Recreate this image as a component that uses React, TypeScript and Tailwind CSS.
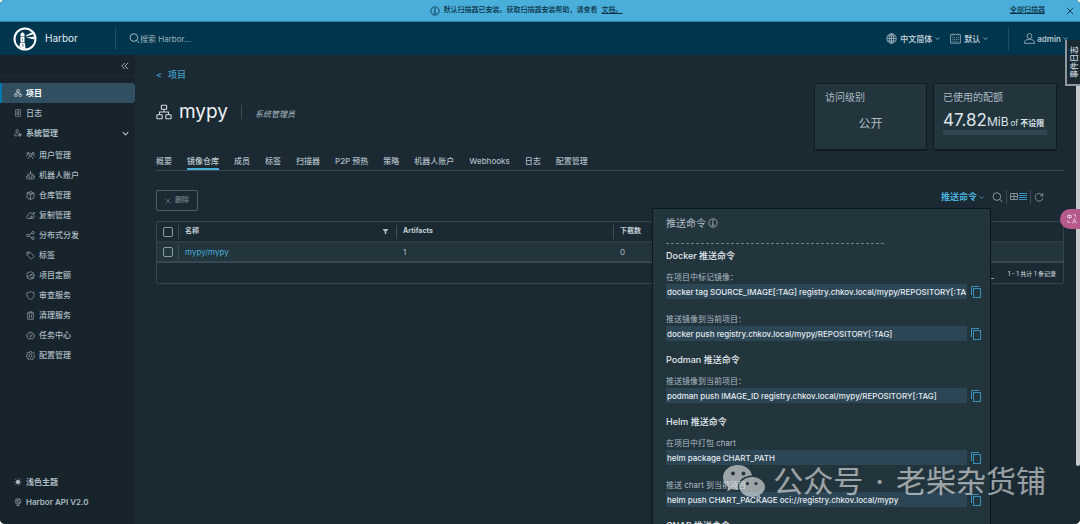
import { useState } from "react";
import type { ReactNode } from "react";

type IconProps = { className?: string; children: ReactNode };

function Icon({ className = "size-[10px]", children }: IconProps) {
  return (
    <svg viewBox="0 0 36 36" fill="none" stroke="currentColor" strokeWidth="2.4" className={`shrink-0 ${className}`} aria-hidden="true">
      {children}
    </svg>
  );
}

const orgPath = (
  <>
    <rect x="12" y="3" width="12" height="9" rx="1" />
    <rect x="2" y="24" width="12" height="9" rx="1" />
    <rect x="22" y="24" width="12" height="9" rx="1" />
    <path d="M18 12v6M8 24v-6h20v6" />
  </>
);

const logPath = (
  <>
    <rect x="7" y="3" width="22" height="30" rx="1" />
    <path d="M12 10h12M12 15h12M12 20h12M12 25h12" />
  </>
);

const adminPath = (
  <>
    <circle cx="14" cy="9" r="6" />
    <path d="M16 31H3v-7c3-4 7-6 11-6h4" />
    <circle cx="26" cy="26" r="5" strokeWidth="4" />
    <path d="M26 17v3M26 32v3M17 26h3M32 26h3" />
  </>
);

const children = [
  {
    name: "用户管理",
    icon: (
      <>
        <circle cx="18" cy="15" r="5" />
        <circle cx="8" cy="9" r="4" />
        <circle cx="28" cy="9" r="4" />
        <path d="M9 32v-5c2-3 5-5 9-5s7 2 9 5v5M2 22v-4c2-2 4-3 8-3M34 22v-4c-2-2-4-3-8-3" />
      </>
    ),
  },
  {
    name: "机器人账户",
    icon: (
      <>
        <path d="M7 32h22a3 3 0 0 0 3-3v-7a14 11 0 0 0-28 0v7a3 3 0 0 0 3 3zM18 11V5M1 20v7M35 20v7M12 27h12" />
        <circle cx="18" cy="4" r="2" />
        <circle cx="12" cy="20" r="2" />
        <circle cx="24" cy="20" r="2" />
      </>
    ),
  },
  { name: "仓库管理", icon: <path d="M18 2l14 6v19l-14 7-14-7V8zM4 8l14 7 14-7M18 15v19M11 5l14 7" /> },
  {
    name: "复制管理",
    icon: <path d="M29 14c4 2 5 6 4 10s-4 6-8 6H8c-4 0-6-3-6-6s3-6 6-6c0-7 5-12 12-11l5 2M20 18l4-4 10-6M29 6h6v6M14 24h12M22 20l4 4-4 4" />,
  },
  {
    name: "分布式分发",
    icon: (
      <>
        <circle cx="7" cy="18" r="5" />
        <circle cx="28" cy="7" r="5" />
        <circle cx="28" cy="29" r="5" />
        <path d="M12 16l12-7M12 20l12 7" />
      </>
    ),
  },
  {
    name: "标签",
    icon: (
      <>
        <path d="M4 4h12l17 17-12 12L4 16z" />
        <circle cx="10" cy="10" r="2" />
      </>
    ),
  },
  {
    name: "项目定额",
    icon: (
      <>
        <circle cx="18" cy="18" r="15" />
        <path d="M4 23c7 2 9-7 15-8 5-1 8 4 14 1M17 26h15M17 18l8-6" />
      </>
    ),
  },
  { name: "审查服务", icon: <path d="M18 2c4 3 9 5 14 5v10c0 8-6 13-14 17C10 30 4 25 4 17V7c5 0 10-2 14-5z" /> },
  { name: "清理服务", icon: <path d="M3 8h30M13 8V3h10v5M7 8v25h22V8M14 14v13M22 14v13" /> },
  {
    name: "任务中心",
    icon: (
      <>
        <path d="M8 31a15 15 0 1 1 20 0zM18 21l8-9M6 20h3M18 8v3M9 12l2 2M27 20h3" />
        <circle cx="18" cy="21" r="2" />
      </>
    ),
  },
  {
    name: "配置管理",
    icon: (
      <>
        <path d="M15 2h6l1 5 3 1 5-3 4 5-3 4 1 3 3 2-1 6-5 1-2 3 1 4-6 2-3-4h-3l-3 4-6-3 2-4-3-3-4-1-1-6 4-2 1-3-3-4 5-4 4 2 3-1z" />
        <circle cx="18" cy="18" r="6" />
      </>
    ),
  },
];

const tabs = ["概要", "镜像仓库", "成员", "标签", "扫描器", "P2P 预热", "策略", "机器人账户", "Webhooks", "日志", "配置管理"];

const commandGroups = [
  {
    title: "Docker 推送命令",
    commands: [
      { label: "在项目中标记镜像：", value: "docker tag SOURCE_IMAGE[:TAG] registry.chkov.local/mypy/REPOSITORY[:TAG]" },
      { label: "推送镜像到当前项目：", value: "docker push registry.chkov.local/mypy/REPOSITORY[:TAG]" },
    ],
  },
  {
    title: "Podman 推送命令",
    commands: [{ label: "推送镜像到当前项目：", value: "podman push IMAGE_ID registry.chkov.local/mypy/REPOSITORY[:TAG]" }],
  },
  {
    title: "Helm 推送命令",
    commands: [
      { label: "在项目中打包 chart", value: "helm package CHART_PATH" },
      { label: "推送 chart 到当前项目", value: "helm push CHART_PACKAGE oci://registry.chkov.local/mypy" },
    ],
  },
  { title: "CNAB 推送命令", commands: [] },
];

function Chevron({ className = "size-[5px]" }: { className?: string }) {
  return (
    <svg viewBox="0 0 10 10" fill="none" stroke="currentColor" strokeWidth="1.6" className={`shrink-0 ${className}`} aria-hidden="true">
      <path d="M1 3l4 4 4-4" />
    </svg>
  );
}

function Info({ className }: { className: string }) {
  return (
    <Icon className={className}>
      <circle cx="18" cy="18" r="15" strokeWidth="3" />
      <path d="M14 16h4v10M13 26h10" strokeWidth="3" />
      <circle cx="18" cy="10" r="1.5" fill="currentColor" />
    </Icon>
  );
}

function SearchIcon() {
  return (
    <Icon className="size-[11px]">
      <circle cx="16" cy="15" r="12.5" strokeWidth="3" />
      <path d="M25 24l9 9" strokeWidth="3" />
    </Icon>
  );
}

function HarborLogo() {
  return (
    <svg viewBox="0 0 48 48" className="size-6 shrink-0" aria-hidden="true">
      <circle cx="24" cy="24" r="21" fill="none" stroke="#fff" strokeWidth="4" />
      <path d="M15 14l4-4 4 4v5h-8zM15 20h8v11h-8zM14 32h10l1 12c-5 0-9-2-12-5z" fill="#fff" />
      <path d="M19 23v4M18 35h2v5" stroke="#00364d" strokeWidth="1.2" fill="none" />
      <path d="M26 17l13-7 3 4-16 5zM26 21l17-2v6z" fill="#fff" />
    </svg>
  );
}

function Banner() {
  return (
    <div className="flex h-[22px] shrink-0 items-center border-b border-[#2c7fa5] bg-[#49aeda] px-[6px] text-[7px] text-[#0b3144]">
      <div className="flex flex-1 items-center justify-center gap-1 pl-9 font-medium">
        <Info className="size-[10px]" />
        <span>默认扫描器已安装。获取扫描器安装帮助，请查看</span>
        <a href="#docs" className="underline">文档。</a>
      </div>
      <a href="#scanners" className="mr-[21px] font-medium underline">全部扫描器</a>
      <button type="button" aria-label="关闭">
        <svg viewBox="0 0 10 10" className="size-2" stroke="currentColor" strokeWidth="1.1"><path d="M1 1l8 8M9 1L1 9" /></svg>
      </button>
    </div>
  );
}

function Header() {
  return (
    <header className="flex h-[33px] shrink-0 items-center bg-[#00364d] pl-[13px] pr-3 text-[8px] text-[#b3c3cc]">
      <HarborLogo />
      <span className="ml-2 w-[70px] text-[10px] text-[#e3eaee]">Harbor</span>
      <span className="h-[22px] w-px bg-[#1d5068]" />
      <label className="ml-[13px] flex flex-1 items-center">
        <SearchIcon />
        <input type="search" aria-label="搜索 Harbor" placeholder="搜索 Harbor..." className="w-40 bg-transparent outline-none placeholder:text-[#9db0ba]" />
      </label>
      <button type="button" className="flex items-center gap-[3px] font-bold">
        <Icon className="size-[11px]">
          <circle cx="18" cy="18" r="15.5" />
          <ellipse cx="18" cy="18" rx="7" ry="15.5" />
          <path d="M2.500 18h31M5 10h26M5 26h26M18 2v32" />
        </Icon>
        中文简体
        <Chevron />
      </button>
      <button type="button" className="ml-[10px] flex items-center gap-[3px] font-bold">
        <Icon className="size-[11px]">
          <path d="M8 5H2v28h32V5h-6M12 5h12M10 1v8M26 1v8M8 15h3M14 15h3M20 15h3M26 15h3M8 21h3M14 21h3M20 21h3M26 21h3M8 27h3M14 27h3M20 27h3" />
        </Icon>
        默认
        <Chevron />
      </button>
      <span className="ml-5 h-[22px] w-px bg-[#1d5068]" />
      <button type="button" className="ml-[15px] flex items-center gap-[2px] font-semibold">
        <Icon className="size-[11px]">
          <circle cx="18" cy="10" r="8" />
          <path d="M2 34v-7c4-5 10-6 16-6s12 1 16 6v7z" />
        </Icon>
        admin
        <Chevron />
      </button>
    </header>
  );
}

function Sidebar() {
  return (
    <aside className="flex w-[135px] shrink-0 flex-col bg-[#17242b] pb-3 text-[8px] text-[#adbbc4]">
      <div className="mb-[6px] flex h-[22px] items-center justify-end border-b border-[#1e2d35] pr-[6px]">
        <button type="button" aria-label="收起">
          <svg viewBox="0 0 10 10" fill="none" stroke="currentColor" strokeWidth="1.1" className="size-2"><path d="M5 1L1 5l4 4M9 1L5 5l4 4" /></svg>
        </button>
      </div>
      <nav className="flex flex-col">
        <a href="#projects" className="flex h-5 items-center gap-1 rounded-r-[3px] border-l-2 border-[#0079ad] bg-[#324f62] pl-3 font-bold text-white">
          <Icon className="size-2">{orgPath}</Icon>
          项目
        </a>
        <a href="#logs" className="flex h-5 items-center gap-1 pl-[14px] font-medium">
          <Icon className="size-2">{logPath}</Icon>
          日志
        </a>
        <button type="button" className="flex h-5 items-center gap-1 pl-[14px] pr-[6px] font-bold">
          <Icon className="size-2">{adminPath}</Icon>
          <span className="flex-1 text-left">系统管理</span>
          <Chevron className="size-[7px]" />
        </button>
        <ul className="mt-[2px]">
          {children.map((item) => (
            <li key={item.name}>
              <a href="#system" className="flex h-5 items-center gap-1 pl-[26px] font-medium">
                <Icon className="size-[9px]">{item.icon}</Icon>
                {item.name}
              </a>
            </li>
          ))}
        </ul>
      </nav>
      <div className="mt-auto">
        <button type="button" className="flex h-5 w-full items-center gap-1 pl-[14px] font-bold">
          <Icon className="size-2">
            <circle cx="18" cy="18" r="9" fill="currentColor" />
            <path d="M18 1v5M18 30v5M1 18h5M30 18h5M6 6l3 3M27 27l3 3M30 6l-3 3M9 27l-3 3" />
          </Icon>
          浅色主题
        </button>
        <a href="#api" className="flex h-5 items-center gap-1 pl-[14px] font-semibold">
          <Icon className="size-2">
            <circle cx="18" cy="15" r="13" />
            <path d="M8 8l8 3 10-5M16 11l-4 9 12 3M24 13l6 5M10 34h16M18 28v6" />
            <circle cx="16" cy="11" r="2" />
            <circle cx="23" cy="20" r="2" />
          </Icon>
          Harbor API V2.0
        </a>
      </div>
    </aside>
  );
}

function PushCommands() {
  return (
    <div className="absolute right-[-7px] top-[18px] z-10 w-[339px] border border-[#0d171c] bg-[#22343c] pb-3 pl-[13px] pr-2 pt-[6px] text-[#adbbc4] shadow">
      <div className="flex h-4 items-center gap-[2px] text-[10px]">
        推送命令
        <Info className="size-[10px]" />
      </div>
      <div className="mt-3 w-[218px] border-t border-dashed border-[#6f808a]" />
      <div className="mt-[5px] flex flex-col gap-3">
        {commandGroups.map((group) => (
          <section key={group.title}>
            <h4 className="mb-2 text-[9px] font-medium leading-[14px] text-[#e3eaee]">{group.title}</h4>
            <div className="flex flex-col gap-[14px]">
              {group.commands.map((command) => (
                <label key={command.value} className="block text-[8px] leading-3">
                  {command.label}
                  <span className="mt-px flex items-center gap-[3px]">
                    <input readOnly value={command.value} className="h-[15px] min-w-0 flex-1 bg-[#2d4656] px-px font-medium text-[#e3eaee] outline-none" />
                    <button type="button" aria-label="复制" className="text-[#3a8fb8]">
                      <svg viewBox="0 0 12 13" fill="none" stroke="currentColor" className="h-[13px] w-3">
                        <path d="M1.500 10V1.500H9" />
                        <rect x="3.500" y="3.500" width="7" height="9" />
                      </svg>
                    </button>
                  </span>
                </label>
              ))}
            </div>
          </section>
        ))}
      </div>
    </div>
  );
}

function Toolbar() {
  const [open, setOpen] = useState(true);

  return (
    <div className="mt-[19px] flex items-start justify-between text-[#8b9ba4]">
      <button type="button" disabled className="flex h-[21px] w-[42px] items-center justify-center gap-1 rounded-[2px] border border-[#4d5f69] text-[7px] font-bold text-[#667780]">
        <svg viewBox="0 0 10 10" className="size-[6px]" stroke="currentColor" strokeWidth="1.4"><path d="M1 1l8 8M9 1L1 9" /></svg>
        删除
      </button>
      <div className="mr-5 flex h-[14px] items-center gap-[3px]">
        <div className="relative mr-[5px]">
          <button type="button" onClick={() => setOpen(!open)} className="flex h-[14px] items-center gap-[2px] text-[9px] font-bold text-[#49afd9]">
            推送命令
            <Chevron />
          </button>
          {open && <PushCommands />}
        </div>
        <button type="button" aria-label="搜索"><SearchIcon /></button>
        <span className="h-[14px] w-px bg-[#3a4b55]" />
        <div className="flex">
          <button type="button" aria-label="卡片视图">
            <svg viewBox="0 0 9 8" fill="none" stroke="currentColor" className="h-2 w-[9px]">
              <path d="M.5.5h7v6h-7zM4 .5v6M.5 3.500h7" strokeWidth=".9" />
            </svg>
          </button>
          <button type="button" aria-label="列表视图" className="text-[#3a8fb8]">
            <svg viewBox="0 0 8 8" stroke="currentColor" className="size-2"><path d="M0 .5h8M0 2.500h8M0 4.500h8M0 6.500h8" /></svg>
          </button>
        </div>
        <span className="h-[14px] w-px bg-[#3a4b55]" />
        <button type="button" aria-label="刷新">
          <Icon className="size-[10px]"><path d="M32 4v10H22M31 13a14 14 0 1 0 1 9" strokeWidth="3" /></Icon>
        </button>
      </div>
    </div>
  );
}

const checkboxStyle = "block size-[10px] appearance-none rounded-[2px] border border-[#8b9ba4] checked:bg-[#49afd9]";

function RepositoryTable() {
  return (
    <div className="mt-[10px] rounded-[2px] border border-[#33454f] text-[7px]">
      <table className="w-full table-fixed border-collapse text-left">
        <colgroup>
          <col className="w-[21px]" />
          <col className="w-[218px]" />
          <col className="w-[217px]" />
          <col />
        </colgroup>
        <thead>
          <tr className="h-5 border-b-2 border-[#2a3b44] font-semibold text-[#c3ced5]">
            <th className="pl-[6px]"><input type="checkbox" aria-label="全选" className={checkboxStyle} /></th>
            <th>
              <div className="flex h-[14px] items-center border-l border-[#3a4b55] pl-[6px] pr-2">
                <span className="flex-1">名称</span>
                <button type="button" aria-label="筛选">
                  <svg viewBox="0 0 10 10" className="size-[5px] fill-[#adbbc4]"><path d="M0 0h10v2L6.500 5v5h-3V5L0 2z" /></svg>
                </button>
              </div>
            </th>
            <th><div className="flex h-[14px] items-center border-l border-[#3a4b55] pl-[6px]">Artifacts</div></th>
            <th><div className="flex h-[14px] items-center border-l border-[#3a4b55] pl-[6px]">下载数</div></th>
          </tr>
        </thead>
        <tbody>
          <tr className="h-5 border-b-2 border-[#374851] bg-[#22343c] text-[8px] text-[#adbbc4]">
            <td className="pl-[6px]"><input type="checkbox" aria-label="mypy/mypy" className={checkboxStyle} /></td>
            <td><div className="flex h-[14px] items-center border-l border-[#3a4b55] pl-[6px]"><a href="#mypy" className="text-[#49afd9]">mypy/mypy</a></div></td>
            <td className="pl-[7px]">1</td>
            <td className="pl-[7px]">0</td>
          </tr>
        </tbody>
      </table>
      <div className="flex h-5 items-center justify-end gap-[14px] pr-[7px] text-[#c3ced5]">
        <select aria-label="每页条数" className="w-6 appearance-none border-b border-[#8b9ba4] bg-transparent">
          <option>15</option>
        </select>
        <span className="text-[6px] font-medium">1 - 1 共计 1 条记录</span>
      </div>
    </div>
  );
}

function ProjectPage() {
  return (
    <main className="min-w-0 flex-1 overflow-hidden bg-[#1b2a32] pl-[21px] pr-4 text-[#adbbc4]">
      <div className="flex h-[97px] items-start justify-between">
        <div className="pt-[13px]">
          <a href="#projects" className="flex h-[14px] items-center gap-[6px] text-[9px] font-medium text-[#3f9cc5]"><span>&lt;</span>项目</a>
          <div className="mt-[18px] flex items-center">
            <Icon className="size-4 text-[#d0dae0]">{orgPath}</Icon>
            <h1 className="ml-[7px] text-[19px] leading-6 text-[#eef2f4]">mypy</h1>
            <span className="mx-[13px] h-[14px] w-px bg-[#3a4b55]" />
            <span className="pt-1 text-[8px] italic">系统管理员</span>
          </div>
        </div>
        <div className="mr-[7px] mt-7 flex gap-[6px]">
          <section className="h-[68px] w-[113px] rounded-[2px] border border-b-2 border-[#111c22] bg-[#22343c] px-[10px] pt-[5px]">
            <h2 className="text-[10px] leading-4">访问级别</h2>
            <p className="mt-[10px] text-center text-[12px] leading-[18px]">公开</p>
          </section>
          <section className="h-[68px] w-[124px] rounded-[2px] border border-b-2 border-[#111c22] bg-[#22343c] px-[9px] pt-[5px]">
            <h2 className="text-[10px] leading-4">已使用的配额</h2>
            <p className="mt-2 flex items-baseline whitespace-nowrap leading-[14px] text-[#dde5ea]">
              <span className="text-[17px]">47.82</span>
              <span className="text-[12px]">MiB</span>
              <span className="ml-[2px] text-[8px]">of</span>
              <span className="ml-[2px] text-[8px] font-bold">不设限</span>
            </p>
            <div className="h-[5px] bg-[#324550]" />
          </section>
        </div>
      </div>
      <div role="tablist" className="flex gap-[15px] border-b border-[#3a4b55] text-[8px] font-medium">
        {tabs.map((tab) => (
          <button
            key={tab}
            type="button"
            role="tab"
            aria-selected={tab === "镜像仓库"}
            className={`h-[18px] border-b-2 pt-[2px] whitespace-nowrap ${tab === "镜像仓库" ? "border-[#49afd9] text-[#c3ced5]" : "border-transparent"}`}
          >
            {tab}
          </button>
        ))}
      </div>
      <Toolbar />
      <RepositoryTable />
    </main>
  );
}

function Watermark() {
  return (
    <div className="pointer-events-none absolute bottom-[25px] right-[34px] z-20 flex items-center gap-2 text-white/55">
      <svg viewBox="0 0 42 33" className="h-[33px] w-[42px]" aria-hidden="true">
        <path
          fill="currentColor"
          fillRule="evenodd"
          d="M15 0C6.500 0 0 5.500 0 12.500c0 4 2 7 5.500 9.500L4 26.500l5-2.500c2 .6 4 1 6.500 1-.3-1-.5-2-.5-3 0-6.500 6-11.500 13-11.500h1C28 4.500 22 0 15 0zM10 6.500a2 2 0 1 1 0 4 2 2 0 0 1 0-4zm10.500 0a2 2 0 1 1 0 4 2 2 0 0 1 0-4z"
        />
        <path
          fill="currentColor"
          fillRule="evenodd"
          d="M29 12c-7 0-12.500 4.500-12.500 10S22 32 29 32c1.500 0 3-.3 4.500-.7l4 2-1-3.500c3.500-2 5.500-4.500 5.500-7.800C42 16.500 36 12 29 12zm-4.500 5a1.600 1.600 0 1 1 0 3.200 1.600 1.600 0 0 1 0-3.200zm8.500 0a1.600 1.600 0 1 1 0 3.200 1.600 1.600 0 0 1 0-3.200z"
        />
      </svg>
      <span className="flex gap-3 whitespace-nowrap text-[30px] leading-9">
        <span>公众号</span>
        <span>·</span>
        <span>老柴杂货铺</span>
      </span>
    </div>
  );
}

export default function App() {
  return (
    <div className="bg-white">
      <div className="relative flex h-screen flex-col overflow-hidden rounded-[5px] bg-[#17242b] font-['Inter','Noto_Sans_CJK_SC',sans-serif]">
        <Banner />
        <Header />
        <div className="flex min-h-0 flex-1">
          <Sidebar />
          <ProjectPage />
        </div>

        <div className="absolute bottom-[58px] right-0 top-[86px] w-1 rounded-b bg-[#c9cccd]" />
        <button type="button" className="absolute right-0 top-10 flex h-[46px] w-[15px] items-center justify-center border-b-2 border-l-2 border-[#8b989f] bg-[#1b2a32] text-[8px] font-medium text-[#d0dae0]">
          <span className="-rotate-90 whitespace-nowrap">事件日志</span>
        </button>
        <button type="button" aria-label="翻译" className="absolute right-0 top-[209px] flex h-5 w-5 items-center justify-center rounded-l-full bg-[#b4598a] pl-1 text-[#e3bfd2]">
          <svg viewBox="0 0 10 10" fill="none" stroke="currentColor" strokeWidth=".9" className="size-[10px]" aria-hidden="true">
            <path d="M.5 1.500h4v2h-4zM2.500 0v5M5.500 9.500l2-5 2 5M6.200 8h2.600M6 .8h2.500v2.500M1 6v2.500h2.500" />
          </svg>
        </button>
        <Watermark />
      </div>
    </div>
  );
}
